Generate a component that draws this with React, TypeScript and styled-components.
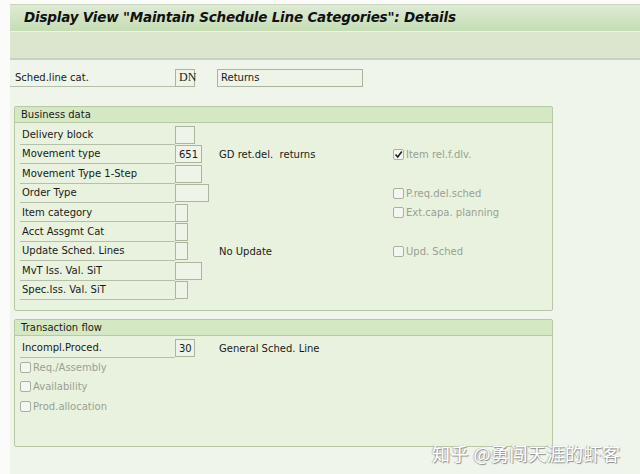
import React from "react";
import styled, { createGlobalStyle } from "styled-components";

const Global = createGlobalStyle`
  html, body { margin: 0; padding: 0; background: #ffffff; }
  body { font-family: "DejaVu Sans", Tahoma, sans-serif; }
  * { box-sizing: border-box; }
`;

const Page = styled.div`
  width: 640px;
  height: 474px;
  padding: 4px 0 0 10px;
  background: #fbfcfa;
  overflow: hidden;
  display: flex;
  flex-direction: column;
`;

const TitleBar = styled.div`
  height: 27px;
  background: linear-gradient(#dfead5, #c4ddb3);
  border-top: 1px solid #c9d6bf;
  display: flex;
  align-items: center;
  padding: 0 0 3px 14px;
  font-size: 13.5px;
  font-weight: bold;
  font-style: italic;
  color: #111;
  letter-spacing: -0.2px;
`;

const Toolbar = styled.div`
  height: 29px;
  background: #dce6cf;
  border-top: 1px solid #eef3e8;
  border-bottom: 2px solid #c8d3bd;
`;

const Content = styled.div`
  flex: 1;
  background: #eff5ea;
  padding-top: 8px;
  font-size: 10px;
  color: #1a1a1a;
`;

const Row = styled.div`
  display: flex;
  align-items: center;
  height: 19.4px;
`;

const Label = styled.div<{ $w: number; $pad?: number }>`
  width: ${(p) => p.$w}px;
  height: 100%;
  display: flex;
  align-items: center;
  padding-left: ${(p) => p.$pad ?? 2}px;
  border-bottom: 1px solid #b5c0a9;
`;

const Field = styled.div<{ $w: number; $mono?: boolean }>`
  width: ${(p) => p.$w}px;
  height: 18px;
  border: 1px solid #a9b59c;
  background: #eef4e8;
  display: flex;
  align-items: center;
  padding-left: 3px;
  font-family: ${(p) => (p.$mono ? '"Liberation Serif", serif' : "inherit")};
  font-size: ${(p) => (p.$mono ? "12px" : "inherit")};
`;

const FieldSlot = styled.div<{ $w: number }>`
  width: ${(p) => p.$w}px;
  display: flex;
`;

const Desc = styled.div<{ $w: number }>`
  width: ${(p) => p.$w}px;
  white-space: pre;
`;

const Group = styled.div<{ $h: number }>`
  width: 539px;
  height: ${(p) => p.$h}px;
  margin-left: 4px;
  border: 1px solid #b6c8a4;
  border-radius: 2px;
  background: #e8f2de;
`;

const GroupHead = styled.div`
  height: 16px;
  background: #d5e8c4;
  border-bottom: 1px solid #b6c8a4;
  padding-left: 6px;
  display: flex;
  align-items: center;
  margin-bottom: 2px;
`;

const Body = styled.div`
  padding-left: 5px;
`;

const Check = styled.span`
  width: 11px;
  height: 11px;
  border: 1px solid #a8b0a0;
  border-radius: 2px;
  background: #f4f7f1;
  display: inline-flex;
  align-items: center;
  justify-content: center;
  margin-right: 2px;
`;

const CheckLabel = styled.div`
  display: flex;
  align-items: center;
  color: #9a9f96;
`;

const Watermark = styled.div`
  position: absolute;
  left: 432px;
  top: 440px;
  font-family: "Noto Sans CJK SC", sans-serif;
  font-size: 18px;
  color: #ffffff;
  text-shadow: 1px 1px 1px #8a8a8a, -1px 0 1px #b0b0b0;
  letter-spacing: 0.5px;
`;

const Spacer = styled.div<{ $h: number; $w?: number }>`
  height: ${(p) => p.$h}px;
  width: ${(p) => p.$w ?? 0}px;
  flex-shrink: 0;
`;

function CB({ checked, label }: { checked?: boolean; label: string }) {
  return (
    <CheckLabel>
      <Check>
        {checked && (
          <svg width="9" height="9" viewBox="0 0 9 9">
            <path d="M1.5 4.5 L3.7 7 L7.8 1.5" stroke="#222" strokeWidth="1.6" fill="none" />
          </svg>
        )}
      </Check>
      {label}
    </CheckLabel>
  );
}

type R = { label: string; w: number; val?: string; desc?: string; cb?: string; checked?: boolean };

const rows: R[] = [
  { label: "Delivery block", w: 20 },
  { label: "Movement type", w: 27, val: "651", desc: "GD ret.del.  returns", cb: "Item rel.f.dlv.", checked: true },
  { label: "Movement Type 1-Step", w: 27 },
  { label: "Order Type", w: 34, cb: "P.req.del.sched" },
  { label: "Item category", w: 13, cb: "Ext.capa. planning" },
  { label: "Acct Assgmt Cat", w: 13 },
  { label: "Update Sched. Lines", w: 13, desc: "No Update", cb: "Upd. Sched" },
  { label: "MvT Iss. Val. SiT", w: 27 },
  { label: "Spec.Iss. Val. SiT", w: 13 },
];

export default function App() {
  return (
    <>
      <Global />
      <Page>
        <TitleBar>Display View "Maintain Schedule Line Categories": Details</TitleBar>
        <Toolbar />
        <Content>
          <Row>
            <Label $w={165} $pad={5}>Sched.line cat.</Label>
            <Field $w={20} $mono>DN</Field>
            <Spacer $h={0} $w={22} />
            <Field $w={146}>Returns</Field>
          </Row>
          <Spacer $h={19} />
          <Group $h={205}>
            <GroupHead>Business data</GroupHead>
            <Body>
              {rows.map((r) => (
                <Row key={r.label}>
                  <Label $w={155}>{r.label}</Label>
                  <FieldSlot $w={44}>
                    <Field $w={r.w}>{r.val}</Field>
                  </FieldSlot>
                  <Desc $w={174}>{r.desc}</Desc>
                  {r.cb && <CB checked={r.checked} label={r.cb} />}
                </Row>
              ))}
            </Body>
          </Group>
          <Spacer $h={8} />
          <Group $h={128}>
            <GroupHead>Transaction flow</GroupHead>
            <Body>
              <Row>
                <Label $w={155}>Incompl.Proced.</Label>
                <FieldSlot $w={44}>
                  <Field $w={20}>30</Field>
                </FieldSlot>
                <Desc $w={200}>General Sched. Line</Desc>
              </Row>
              <Row><CB label="Req./Assembly" /></Row>
              <Row><CB label="Availability" /></Row>
              <Row><CB label="Prod.allocation" /></Row>
            </Body>
          </Group>
        </Content>
        <Watermark>知乎 @勇闯天涯的虾客</Watermark>
      </Page>
    </>
  );
}
